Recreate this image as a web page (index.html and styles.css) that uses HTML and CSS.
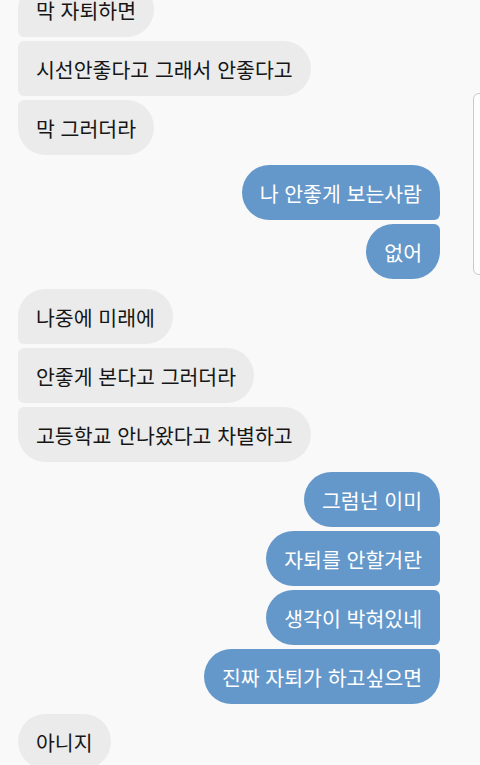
FILE: index.html
```html
<!DOCTYPE html>
<html lang="ko">

<head>
    <meta charset="UTF-8">
    <meta name="viewport" content="width=device-width, initial-scale=1.0">
    <title>대화</title>
    <link rel="stylesheet" href="styles.css">
</head>

<body>
    <!-- 대화 목록 -->
    <div class="chat">
        <div class="group in">
            <div class="bubble">막 자퇴하면</div>
            <div class="bubble">시선안좋다고 그래서 안좋다고</div>
            <div class="bubble">막 그러더라</div>
        </div>
        <div class="group out">
            <div class="bubble">나 안좋게 보는사람</div>
            <div class="bubble">없어</div>
        </div>
        <div class="group in">
            <div class="bubble">나중에 미래에</div>
            <div class="bubble">안좋게 본다고 그러더라</div>
            <div class="bubble">고등학교 안나왔다고 차별하고</div>
        </div>
        <div class="group out">
            <div class="bubble">그럼넌 이미</div>
            <div class="bubble">자퇴를 안할거란</div>
            <div class="bubble">생각이 박혀있네</div>
            <div class="bubble">진짜 자퇴가 하고싶으면</div>
        </div>
        <div class="group in">
            <div class="bubble">아니지</div>
        </div>
    </div>
    <!-- 스크롤 손잡이 -->
    <div class="handle"></div>
</body>

</html>
```

FILE: styles.css
```css
/* 색상 변수 */
:root {
    --page-bg: #f9f9f9;
    --in-bg: #ebebeb;
    --out-bg: #6598ca;
    --in-color: #161616;
    --out-color: #ffffff;
    --big: 28px;
    --small: 6px;
}

* {
    margin: 0;
    padding: 0;
    box-sizing: border-box;
}

html,
body {
    height: 100%;
    overflow: hidden;
}

body {
    position: relative;
    background: var(--page-bg);
    font-family: "Noto Sans CJK KR", "Noto Sans", sans-serif;
    font-size: 20.5px;
}

.chat {
    display: flex;
    flex-direction: column;
    gap: 10px;
    /* 위쪽은 잘려 보임 */
    margin-top: -18px;
    padding: 0 40px 0 18px;
}

.group {
    display: flex;
    flex-direction: column;
    gap: 4px;
}

.group.in {
    align-items: flex-start;
}

.group.out {
    align-items: flex-end;
}

.bubble {
    height: 55px;
    padding: 0 18px;
    line-height: 57px;
    white-space: nowrap;
    border-radius: var(--big);
}

/* 받은 메시지 */
.in .bubble {
    background: var(--in-bg);
    color: var(--in-color);
}

.in .bubble:not(:last-child) {
    border-bottom-left-radius: var(--small);
}

.in .bubble:not(:first-child) {
    border-top-left-radius: var(--small);
}

/* 보낸 메시지 */
.out .bubble {
    background: var(--out-bg);
    color: var(--out-color);
}

.out .bubble:not(:last-child) {
    border-bottom-right-radius: var(--small);
}

.out .bubble:not(:first-child) {
    border-top-right-radius: var(--small);
}

.handle {
    position: absolute;
    top: 93px;
    left: 473px;
    width: 16px;
    height: 182px;
    background: #fdfdfd;
    border: 1px solid #cacaca;
    border-radius: 6px;
}
```
